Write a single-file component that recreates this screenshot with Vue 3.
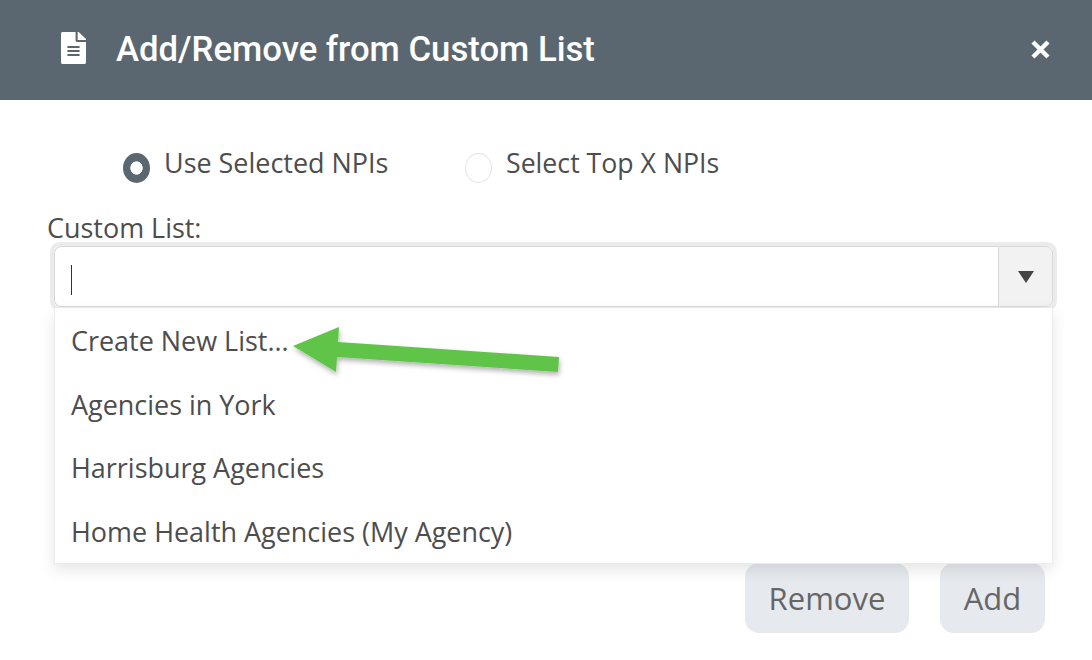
<script setup>
const items = ['Create New List...', 'Agencies in York', 'Harrisburg Agencies', 'Home Health Agencies (My Agency)']
</script>

<template>
  <div class="modal">
    <header class="head">
      <svg class="doc" viewBox="0 0 384 512" preserveAspectRatio="none">
        <path fill="#fff" d="M224 136V0H24C10.7 0 0 10.7 0 24v464c0 13.3 10.7 24 24 24h336c13.3 0 24-10.7 24-24V160H248c-13.2 0-24-10.8-24-24zm64 236c0 6.6-5.4 12-12 12H108c-6.6 0-12-5.4-12-12v-8c0-6.6 5.4-12 12-12h168c6.6 0 12 5.4 12 12v8zm0-64c0 6.6-5.4 12-12 12H108c-6.6 0-12-5.4-12-12v-8c0-6.6 5.4-12 12-12h168c6.6 0 12 5.4 12 12v8zm0-72v8c0 6.6-5.4 12-12 12H108c-6.6 0-12-5.4-12-12v-8c0-6.6 5.4-12 12-12h168c6.6 0 12 5.4 12 12zm96-114.1v6.1H256V0h6.1c6.4 0 12.5 2.5 17 7l97.9 98c4.5 4.5 7 10.6 7 16.9z" />
      </svg>
      <h1>Add/Remove from Custom List</h1>
      <svg class="close" viewBox="0 0 19 19">
        <path d="M2 2L17 17M17 2L2 17" stroke="#fff" stroke-width="4.4" fill="none" />
      </svg>
    </header>

    <div class="radios">
      <label class="radio first">
        <span class="dot on"></span>
        Use Selected NPIs
      </label>
      <label class="radio">
        <span class="dot"></span>
        Select Top X NPIs
      </label>
    </div>

    <div class="field">
      <div class="label">Custom List:</div>
      <div class="combo">
        <div class="input"><span class="caret"></span></div>
        <div class="toggle"><span class="tri"></span></div>
      </div>
    </div>

    <div class="actions">
      <button class="btn remove">Remove</button>
      <button class="btn add">Add</button>
    </div>

    <ul class="menu">
      <li v-for="item in items" :key="item">{{ item }}</li>
    </ul>

    <svg class="arrow" viewBox="0 0 1092 660">
      <defs>
        <filter id="arrowShadow" x="-10%" y="-30%" width="120%" height="170%">
          <feDropShadow dx="1" dy="3" stdDeviation="2.5" flood-color="#000" flood-opacity="0.3" />
        </filter>
      </defs>
      <path fill="#60c44a" filter="url(#arrowShadow)" d="M293 346L339 327L338 342L559 357L558 372L337 357L336 372Z" />
    </svg>
  </div>
</template>

<style scoped>
.modal {
  position: relative;
  width: 1092px;
  height: 660px;
  overflow: hidden;
  background: #fff;
  font-family: "Open Sans", sans-serif;
  font-size: 26.95px;
  color: #4d4d4d;
}

.head {
  height: 100px;
  background: #5b6770;
  display: flex;
  align-items: center;
  padding: 0 42px 0 61px;
  box-sizing: border-box;
}

.doc {
  width: 25px;
  height: 32px;
  margin: 0 30px 4px 0;
}

h1 {
  margin: 0 0 2px;
  flex: 1;
  font-family: Roboto, sans-serif;
  font-size: 34.7px;
  font-weight: 500;
  color: #fff;
}

.close {
  width: 19px;
  height: 19px;
  margin-bottom: 1px;
}

.radios {
  display: flex;
  padding: 44px 0 0 123px;
  height: 36px;
  font-size: 26.7px;
}

.radio {
  display: flex;
  align-items: center;
  height: 36px;
}

.first {
  width: 342px;
  font-size: 26.95px;
}

.dot {
  width: 27px;
  height: 30px;
  margin: 12px 14px 0 0;
  border-radius: 50%;
  box-sizing: border-box;
  border: 1px solid #e2e3ec;
}

.dot.on {
  border: 0;
  background: radial-gradient(ellipse 6.5px 7px at center, #fff 90%, #5b6770 100%);
}

.field {
  padding: 0 36px 0 47px;
}

.label {
  height: 31px;
  margin-top: 31px;
  line-height: 34px;
}

.combo {
  display: flex;
  width: 1007px;
  height: 69px;
  margin-left: 3px;
  box-sizing: border-box;
  border: 4px solid #ebebeb;
  border-radius: 10px;
  background: #fff;
}

.input {
  flex: 1;
  border: 1px solid #d9d9d9;
  border-right: 0;
  border-radius: 7px 0 0 7px;
  display: flex;
  align-items: center;
  padding-left: 16px;
}

.caret {
  width: 1px;
  height: 30px;
  margin-top: 6px;
  background: #333;
}

.toggle {
  width: 55px;
  box-sizing: border-box;
  background: #f2f2f2;
  border: 1px solid #d9d9d9;
  border-radius: 0 7px 7px 0;
  display: flex;
  align-items: center;
  justify-content: center;
}

.tri {
  width: 0;
  height: 0;
  border-left: 8px solid transparent;
  border-right: 8px solid transparent;
  border-top: 12px solid #444;
}

.actions {
  display: flex;
  justify-content: flex-end;
  gap: 31px;
  padding: 252px 47px 0 0;
}

.btn {
  height: 70px;
  border: 0;
  border-radius: 14px;
  background: #e6e9ee;
  color: #666;
  font-family: inherit;
  font-size: 31px;
  padding: 0;
}

.remove {
  width: 164px;
}

.add {
  width: 105px;
}

.menu {
  position: absolute;
  left: 54px;
  top: 308px;
  width: 999px;
  height: 256px;
  margin: 0;
  padding: 1px 0 0;
  box-sizing: border-box;
  list-style: none;
  background: #fff;
  border: 1px solid #ececec;
  border-top: 0;
  box-shadow: 0 6px 14px rgba(0, 0, 0, 0.1);
}

.menu li {
  height: 63.5px;
  line-height: 63.5px;
  padding-left: 16px;
}

.arrow {
  position: absolute;
  left: 0;
  top: 0;
  width: 1092px;
  height: 660px;
  pointer-events: none;
}
</style>
